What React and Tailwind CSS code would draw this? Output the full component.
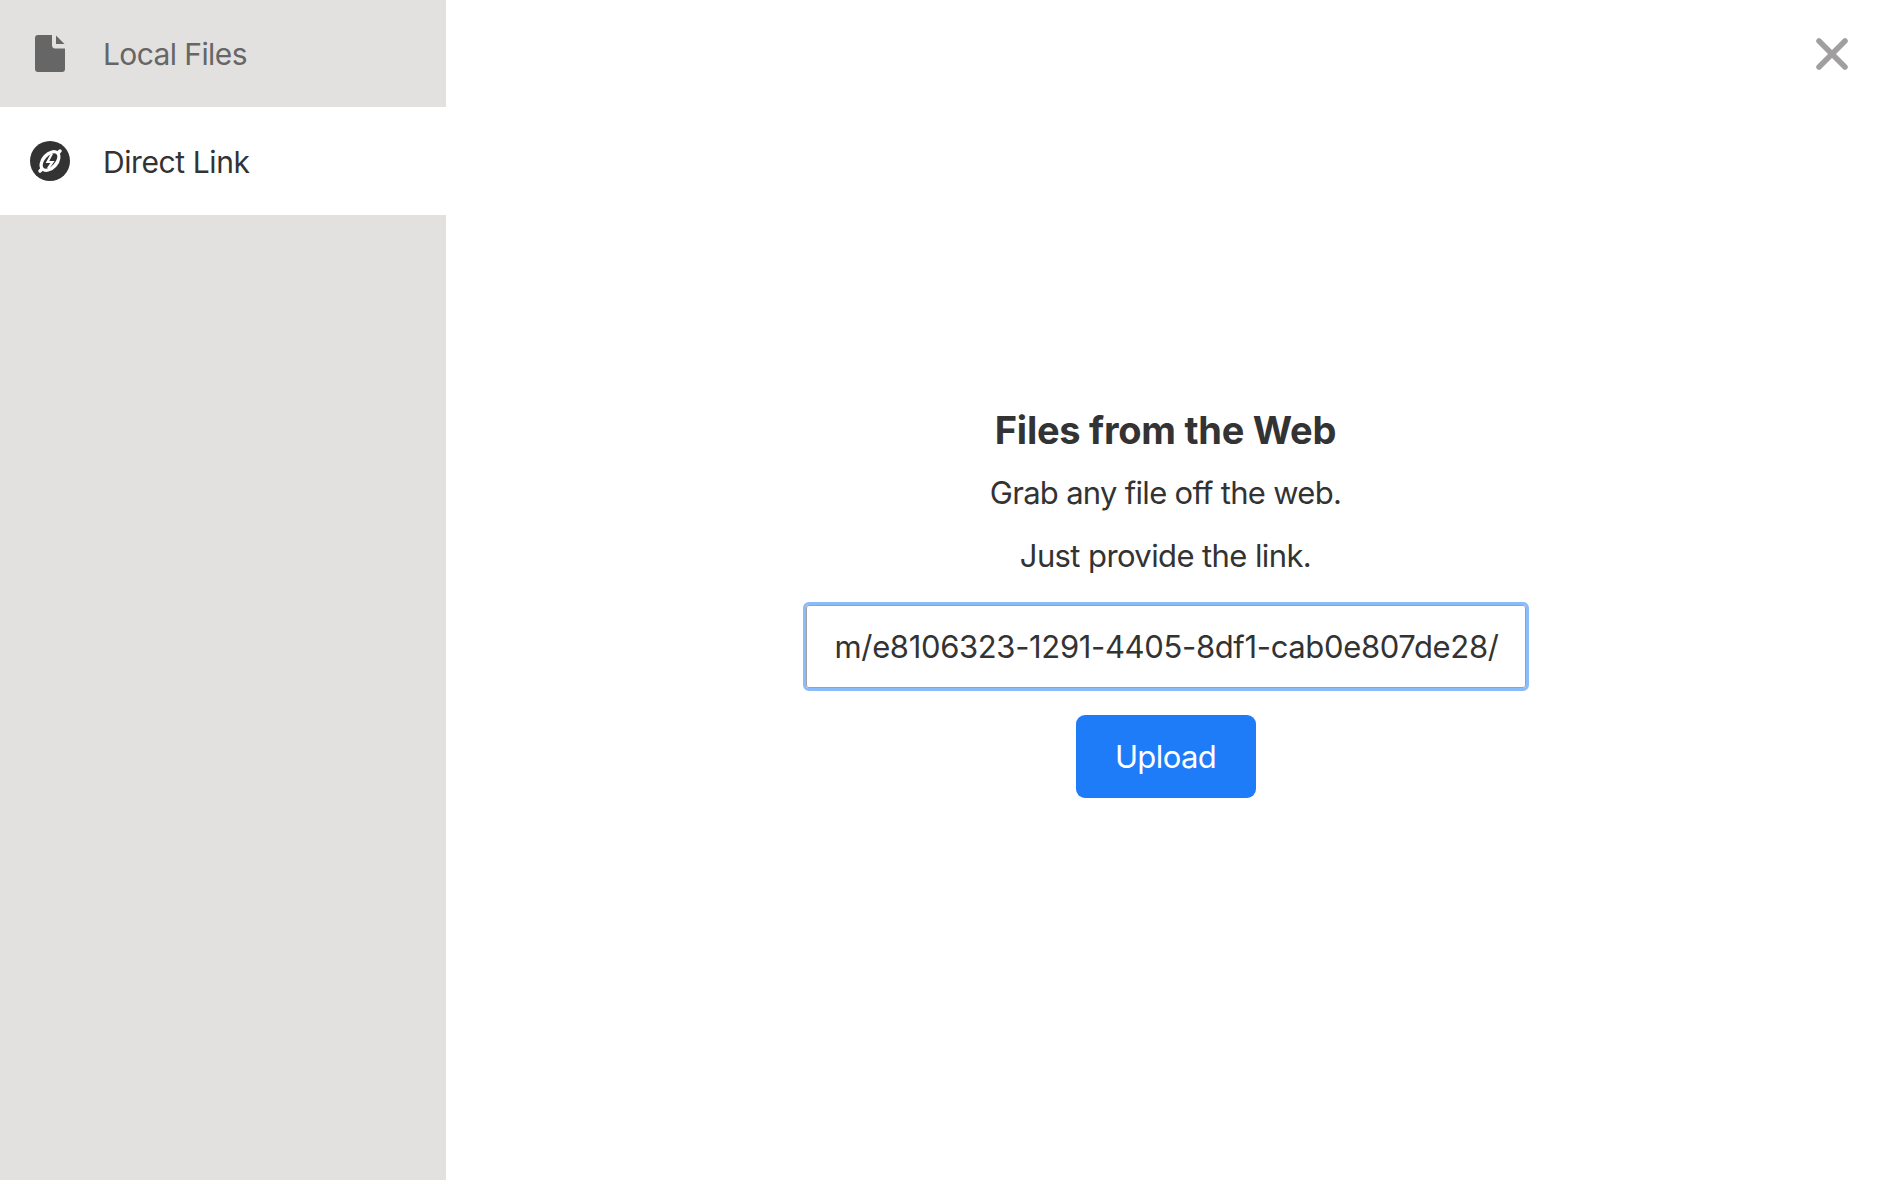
const FileIcon = () => (
  <svg width="30" height="37" viewBox="0 0 30 37" className="shrink-0">
    <path d="M3 0h14v10c0 2 1 3.500 3 3.500h10V34a3 3 0 0 1-3 3H3a3 3 0 0 1-3-3V3a3 3 0 0 1 3-3z" fill="#666" />
    <path d="M21 0.500l8.500 8.500H21z" fill="#666" />
  </svg>
);

const LinkIcon = () => (
  <svg width="40" height="40" viewBox="0 0 40 40" className="shrink-0">
    <circle cx="20" cy="20" r="20" fill="#333" />
    <path d="M30 10l-4 4M10 30l4-4" stroke="#fff" strokeWidth="3.500" strokeLinecap="round" />
    <ellipse cx="20" cy="20" rx="12.500" ry="8.500" fill="#fff" transform="rotate(-48 20 20)" />
    <ellipse cx="20" cy="20" rx="9.500" ry="5" fill="#333" transform="rotate(-48 20 20)" />
    <path d="M22 12.500l-4.500 8.500h5L18 27.500" fill="none" stroke="#fff" strokeWidth="2.200" />
  </svg>
);

function NavItem({ icon, label, active, height, textClass }) {
  return (
    <div
      className={`flex items-center pl-[30px] ${height} ${
        active ? 'bg-white text-[#333]' : 'text-[#666]'
      }`}
    >
      <div className="w-[40px] flex justify-center">{icon}</div>
      <span className={`ml-[33px] text-[30px] ${textClass}`}>{label}</span>
    </div>
  );
}

export default function App() {
  return (
    <div className="relative flex h-[1180px] w-full bg-white font-['Inter',sans-serif] text-[#333]">
      {/* Sidebar */}
      <div className="w-[446px] shrink-0 bg-[#e2e1e0]">
        <NavItem icon={<FileIcon />} label="Local Files" height="h-[107px]" textClass="pt-[1px] tracking-[-0.6px]" />
        <NavItem icon={<LinkIcon />} label="Direct Link" height="h-[108px]" textClass="pt-[2px] tracking-[-0.4px]" active />
      </div>

      {/* Close */}
      <button className="absolute top-[38px] right-[34px]">
        <svg width="32" height="32" viewBox="0 0 32 32" className="block">
          <path d="M3 3l26 26M29 3L3 29" stroke="#a09e9e" strokeWidth="5.500" strokeLinecap="round" />
        </svg>
      </button>

      {/* Main */}
      <div className="flex-1 flex flex-col items-center pl-[3px] pt-[405px]">
        <h1 className="text-[38px] font-bold leading-[50px] tracking-[-0.25px]">Files from the Web</h1>
        <p className="mt-[13px] text-[31px] leading-[50px] tracking-[-0.7px]">Grab any file off the web.</p>
        <p className="mt-[13px] text-[31px] leading-[50px] tracking-[-0.6px]">Just provide the link.</p>
        <div className="mt-[21px] w-[726px] h-[89px] rounded-[6px] border-[3px] border-[#8abbfb] bg-white">
          <input
            readOnly
            value="m/e8106323-1291-4405-8df1-cab0e807de28/"
            className="block w-full h-full rounded-[3px] border border-[#a0a0a0] bg-white pl-[28px] pr-[20px] text-[31px] tracking-[-0.35px] text-[#333] outline-none"
          />
        </div>
        <button className="mt-[24px] w-[180px] h-[83px] pt-[1px] rounded-[9px] bg-[#1e7cf9] text-white text-[31px] tracking-[-0.6px]">
          Upload
        </button>
      </div>
    </div>
  );
}
